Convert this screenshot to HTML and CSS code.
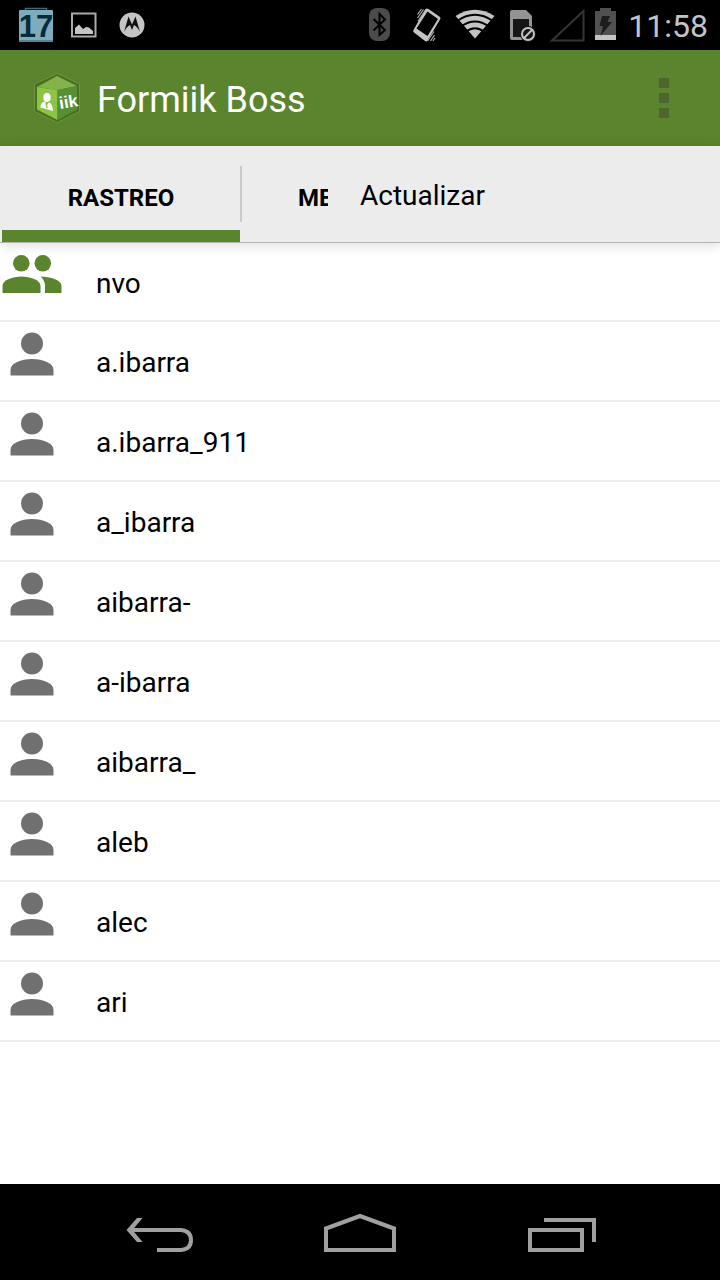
FILE: index.html
```html
<!DOCTYPE html>
<html lang="es">
<head>
<meta charset="utf-8">
<meta name="viewport" content="width=device-width, initial-scale=1">
<title>Formiik Boss</title>
<link rel="stylesheet" href="styles.css">
</head>
<body>
<div class="screen">
  <div class="status">
    <svg class="status-left" width="160" height="50" viewBox="0 0 160 50" aria-hidden="true">
      <path d="M25.500 11V8.500H46.500V11" fill="none" stroke="#466773" stroke-width="1.500"/>
      <rect x="19" y="10" width="34" height="32" rx="1" fill="#7facbc"/>
      <rect x="19" y="40" width="34" height="2" fill="#5b8290"/>
      <text class="calendar-day" x="36" y="37" text-anchor="middle">17</text>
      <rect x="72" y="13.500" width="23.500" height="23" fill="none" stroke="#aaa" stroke-width="2"/>
      <path d="M75 34V28L79 24.500L83 29L86 27L89 27.500L93 31V34Z" fill="#c4c4c4"/>
      <circle cx="132" cy="25" r="12.500" fill="#c4c4c4"/>
      <path d="M124 32L128.500 16.500L132 24.500L135.500 16.500L140 32C138.500 29 137.500 27.500 135.500 26L134 25L132 30L130 25L128.500 26C126.500 27.500 125.500 29 124 32Z" fill="#101010"/>
    </svg>
    <div class="status-right">
      <svg width="250" height="50" viewBox="366 0 250 50" aria-hidden="true">
        <rect x="369" y="8" width="21" height="33" rx="8" fill="#4b4b4b"/>
        <path d="M373.500 19L385 30L379.500 35V14L385 19.500L373.500 30.500" fill="none" stroke="#000" stroke-width="2"/>
        <path d="M425.500 9Q427 8 428.500 9L440 17Q441 18 440 19.500L427.500 40.500Q426.500 42 425 41L414 32.500Q412.500 31.500 413.500 30Z" fill="#c4c4c4"/>
        <path d="M427.500 11.500L438 19L427.500 36L416.500 28.500Z" fill="#000"/>
        <path d="M417.500 18L423.500 9.500M417.500 14.500L421.500 9M418 21L426 9.500M427.500 41L434 31.500M430.500 41L434.500 35M433 41L435 38" fill="none" stroke="#b0b0b0" stroke-width="1.200"/>
        <path d="M475 38.500L455.500 16Q475 3.500 494.500 16Z" fill="#c4c4c4"/>
        <path d="M457 21Q475 8.500 493 21M461 26.500Q475 16.500 489 26.500M465.500 32Q475 24.500 484.500 32" fill="none" stroke="#000" stroke-width="2"/>
        <path d="M510 12Q510 10 512 10H526L532 16V40H512Q510 40 510 38Z" fill="#939393"/>
        <rect x="513" y="19" width="16" height="18" fill="#161616"/>
        <circle cx="528" cy="34" r="8" fill="#161616"/>
        <circle cx="528" cy="34" r="6" fill="none" stroke="#c4c4c4" stroke-width="2"/>
        <path d="M524 38L532 30" stroke="#c4c4c4" stroke-width="2"/>
        <path d="M552 40.500L583.500 11V40.500Z" fill="none" stroke="#353535" stroke-width="2"/>
        <path d="M595 11H600V8H611V11H616V40H595Z" fill="#505050"/>
        <rect x="595" y="35" width="21" height="5" fill="#c4c4c4"/>
        <path d="M602 16H610L607.500 22H612L600.500 36L603 26H599.500Z" fill="#1c1c1c"/>
      </svg>
      <time class="clock" datetime="11:58">11:58</time>
    </div>
  </div>
  <header class="appbar">
    <svg class="logo" width="48" height="52" viewBox="33 72 48 52" aria-hidden="true">
      <path d="M57.500 73.500L79.500 84V111.500L57.500 122.500L34.500 111.500V84Z" fill="#477120" stroke="#72933f" stroke-width="1"/>
      <path d="M57 76L77 86L57.500 90L37 87Z" fill="#84b349"/>
      <path d="M37 87L57.500 90V120L37 109.500Z" fill="#8bc543"/>
      <path d="M57.500 90L77 86V109.500L57.500 120Z" fill="#588f35"/>
      <ellipse cx="47" cy="97.500" rx="3.700" ry="4.500" fill="#fff"/>
      <path d="M40.500 107.500C40.500 103 43 102 45 101.500L47 105L49 102.500C51.500 103.500 53 106.500 53 111Z" fill="#fff"/>
      <path d="M46 103L47 108" stroke="#8bc543" stroke-width="1.500"/>
      <text class="logo-text" x="60" y="109" transform="rotate(-9 60 109)">iik</text>
    </svg>
    <h1 class="title">Formiik Boss</h1>
    <button class="overflow" type="button" aria-label="Más opciones" aria-expanded="true">
      <span class="dot"></span><span class="dot"></span><span class="dot"></span>
    </button>
  </header>
  <nav class="tabs">
    <button class="tab tab-active" type="button">RASTREO</button>
    <button class="tab tab-next" type="button">ME</button>
    <div class="menu" role="menu"><button class="menu-item" type="button" role="menuitem">Actualizar</button></div>
  </nav>
  <svg class="symbols" aria-hidden="true">
    <symbol id="person" viewBox="0 0 64 64"><circle cx="32" cy="21.500" r="11"/><path d="M10.500 53.500V48C10.500 41 21 37 32 37S53.500 41 53.500 48V53.500Z"/></symbol>
    <symbol id="group" viewBox="0 0 64 64"><circle cx="21.300" cy="20.300" r="8.300"/><circle cx="42.800" cy="20.300" r="8.300"/><path d="M2.500 50V43C2.500 37 13 33.500 21.500 33.500S40.500 37 40.500 43V50Z"/><path d="M40.500 33.500C50 33.500 61.500 37 61.500 43V50H45V43C45 39 43.500 36 40.500 33.500Z"/></symbol>
  </svg>
  <main class="content">
    <ul class="list">
      <li class="row"><svg class="icon icon-group"><use href="#group"/></svg><span class="name">nvo</span></li>
      <li class="row"><svg class="icon"><use href="#person"/></svg><span class="name">a.ibarra</span></li>
      <li class="row"><svg class="icon"><use href="#person"/></svg><span class="name">a.ibarra_911</span></li>
      <li class="row"><svg class="icon"><use href="#person"/></svg><span class="name">a_ibarra</span></li>
      <li class="row"><svg class="icon"><use href="#person"/></svg><span class="name">aibarra-</span></li>
      <li class="row"><svg class="icon"><use href="#person"/></svg><span class="name">a-ibarra</span></li>
      <li class="row"><svg class="icon"><use href="#person"/></svg><span class="name">aibarra_</span></li>
      <li class="row"><svg class="icon"><use href="#person"/></svg><span class="name">aleb</span></li>
      <li class="row"><svg class="icon"><use href="#person"/></svg><span class="name">alec</span></li>
      <li class="row"><svg class="icon"><use href="#person"/></svg><span class="name">ari</span></li>
    </ul>
  </main>
  <footer class="navbar">
    <button class="nav-button" type="button" aria-label="Atrás"><svg width="72" height="48" viewBox="122 1210 72 48"><path d="M131 1230H181Q191 1231 191 1240Q191 1249 181 1250H157" fill="none" stroke="#a0a0a0" stroke-width="4"/><path d="M142.500 1218H137L126.500 1230L137 1242H142.500L132.500 1230Z" fill="#a0a0a0"/></svg></button>
    <button class="nav-button" type="button" aria-label="Inicio"><svg width="76" height="48" viewBox="322 1210 76 48"><path d="M326 1250V1228.500L360 1216L394 1228.500V1250Z" fill="none" stroke="#a0a0a0" stroke-width="4"/></svg></button>
    <button class="nav-button" type="button" aria-label="Recientes"><svg width="72" height="48" viewBox="526 1210 72 48"><path d="M530 1230H582V1250H530ZM544 1220H594V1242" fill="none" stroke="#a0a0a0" stroke-width="4"/></svg></button>
  </footer>
</div>
</body>
</html>
```
FILE: styles.css
```css
* { box-sizing: border-box; }
body { margin: 0; background: #fff; color: #000; font-family: Roboto, "Noto Sans", sans-serif; }
button { margin: 0; padding: 0; border: 0; background: none; color: inherit; font: inherit; }
.screen { display: flex; flex-direction: column; min-height: 100vh; }

.status { display: flex; justify-content: space-between; height: 50px; background: #000; }
.status svg { display: block; }
.status-right { display: flex; align-items: center; gap: 12px; padding-right: 12px; }
.calendar-day { font-family: "Liberation Sans", Arial, sans-serif; font-size: 31px; font-weight: 700; fill: #062b3a; }
.clock { padding-top: 2px; color: #c4c4c4; font-size: 32px; line-height: 48px; }

.appbar { display: flex; align-items: center; height: 96px; padding-left: 33px; background: #5b842e; color: #fff; }
.logo { flex: none; margin-right: 16px; }
.logo-text { font-family: "Liberation Sans", Arial, sans-serif; font-size: 17px; font-weight: 700; fill: #fff; }
.title { flex: 1; margin: 0; padding-top: 4px; font-size: 36px; font-weight: 400; line-height: 44px; }
.overflow { display: flex; flex-direction: column; align-items: center; justify-content: center; gap: 5px; width: 112px; height: 96px; }
.dot { width: 10px; height: 10px; background: #4e662e; }

.tabs { position: relative; display: flex; height: 97px; padding-left: 2px; border-bottom: 1px solid #b4b4b4; background: #ececec; box-shadow: 0 2px 12px rgba(0, 0, 0, 0.14); }
.tab { width: 240px; padding-top: 8px; font-size: 24px; font-weight: 700; line-height: 28px; }
.tab-active { width: 238px; padding-top: 20px; border-bottom: 12px solid #5b842e; }
.tab-next { padding-left: 58px; background: linear-gradient(#cacaca, #cacaca) 0 20px / 2px 56px no-repeat; text-align: left; }
.menu { position: absolute; top: 0; right: 0; width: 392px; height: 96px; background: #ececec; }
.menu-item { width: 100%; height: 96px; padding-top: 4px; padding-left: 32px; font-size: 28px; line-height: 36px; text-align: left; }

.symbols { display: none; }
.content { flex: 1; }
.list { margin: 0; padding: 0; list-style: none; }
.row { display: flex; align-items: center; gap: 32px; height: 80px; border-bottom: 2px solid #ededed; font-size: 28px; line-height: 36px; }
.row:first-child { height: 79px; }
.name { padding-top: 4px; }
.icon { flex: none; align-self: flex-start; width: 64px; height: 64px; fill: #707070; }
.icon-group { fill: #5b842e; }

.navbar { display: flex; align-items: center; justify-content: center; height: 96px; background: #000; }
.nav-button { display: flex; align-items: center; justify-content: center; width: 28%; height: 96px; padding-top: 4px; }
```
